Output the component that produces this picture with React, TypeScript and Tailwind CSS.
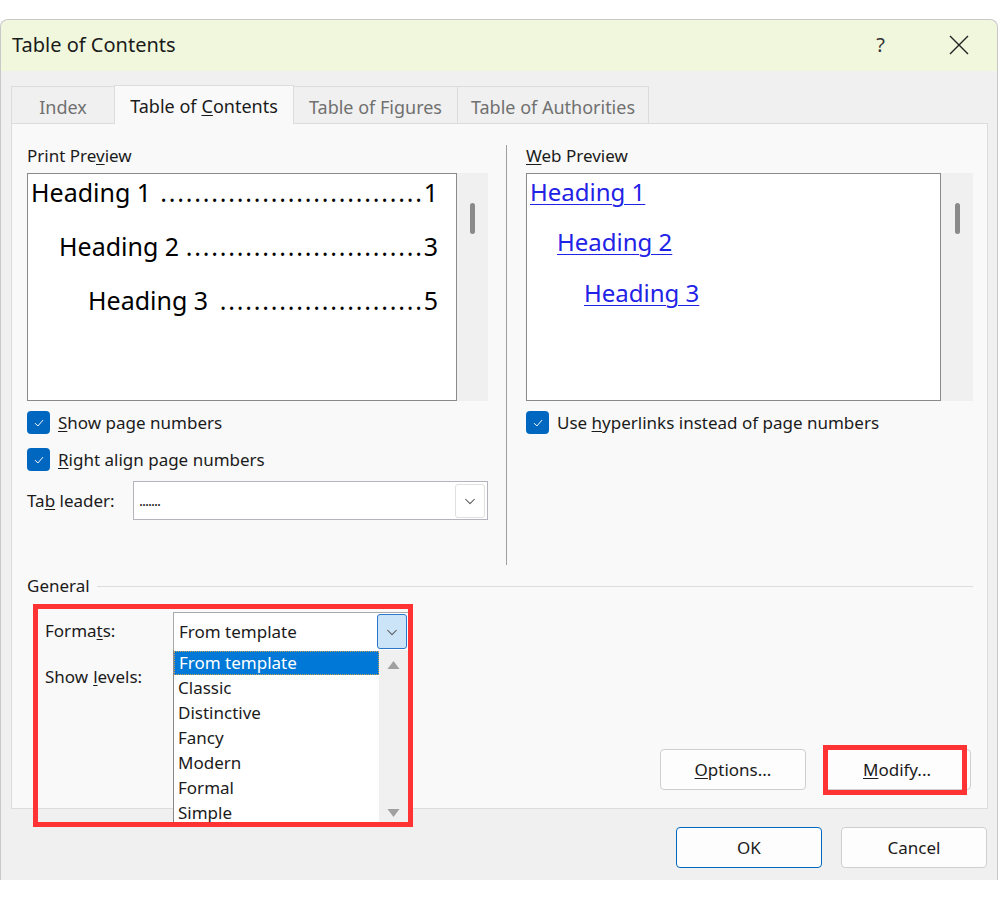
import React from "react";

function Check() {
  return (
    <svg viewBox="0 0 16 16" className="h-[12px] w-[12px]" fill="none" stroke="white" strokeWidth="1.3" strokeLinecap="round" strokeLinejoin="round">
      <path d="M3 8.5 L6.5 12 L13 4.5" />
    </svg>
  );
}

function Chevron() {
  return (
    <svg viewBox="0 0 16 16" className="h-[14px] w-[14px]" fill="none" stroke="#555" strokeWidth="1.2" strokeLinecap="round" strokeLinejoin="round">
      <path d="M3 6 L8 11 L13 6" />
    </svg>
  );
}

function CheckRow({ label, u }: { label: string; u: number }) {
  return (
    <div className="flex h-[23px] items-center gap-[8px]">
      <div className="flex h-[23px] w-[23px] items-center justify-center rounded-[4px] bg-[#0067c0]">
        <Check />
      </div>
      <span className="text-[17px] text-[#1b1b1b]">
        {label.slice(0, u)}
        <span className="underline underline-offset-2">{label[u]}</span>
        {label.slice(u + 1)}
      </span>
    </div>
  );
}

function TocLine({ text, num, dots, indent }: { text: string; num: string; dots: number; indent: string }) {
  return (
    <div className={`mb-[16px] flex h-[38px] items-center pr-[18px] text-[25px] text-black ${indent}`}>
      <span className="whitespace-pre">{text}</span>
      <span className="flex flex-1 justify-end whitespace-nowrap tracking-[1.8px]">{".".repeat(dots)}</span>
      <span>{num}</span>
    </div>
  );
}

export default function App() {
  const formats = ["Classic", "Distinctive", "Fancy", "Modern", "Formal", "Simple"];
  return (
    <div className="h-[900px] w-[1000px] bg-white pt-[19px] font-['Noto_Sans',sans-serif] text-[#1b1b1b]">
      <div className="h-[861px] w-[998px] rounded-t-[8px] border-x border-t border-[#c8c8c8] bg-[#f0f0f0]">
        {/* title bar */}
        <div className="flex h-[51px] items-center rounded-t-[8px] bg-[#f0f7dc] pb-[2px] pl-[11px] pr-[28px]">
          <span className="text-[20px] text-[#1b1b1b]">Table of Contents</span>
          <span className="ml-auto mr-[64px] text-[20px] text-[#333]">?</span>
          <svg viewBox="0 0 20 20" className="h-[20px] w-[20px]" fill="none" stroke="#222" strokeWidth="1.4">
            <path d="M1 1 L19 19 M19 1 L1 19" />
          </svg>
        </div>

        {/* tabs */}
        <div className="flex h-[52px] items-end pl-[10px]">
          <div className="flex h-[37px] w-[103px] items-center justify-center border-l border-t border-[#dcdcdc] pt-[4px] text-[18px] text-[#707070]">Index</div>
          <div className="relative z-10 -mb-px flex h-[39px] w-[180px] items-center justify-center border-x border-t border-[#dcdcdc] bg-[#f9f9f9] pt-[3px] text-[18px] text-[#1b1b1b]">
            Table of <span className="ml-[5px] underline underline-offset-2">C</span>ontents
          </div>
          <div className="flex h-[37px] w-[164px] items-center justify-center border-t border-r border-[#dcdcdc] pt-[4px] text-[18px] text-[#707070]">Table of Figures</div>
          <div className="flex h-[37px] w-[191px] items-center justify-center border-t border-r border-[#dcdcdc] pt-[4px] text-[18px] text-[#707070]">Table of Authorities</div>
        </div>

        {/* panel */}
        <div className="relative ml-[10px] h-[686px] w-[977px] border border-[#dcdcdc] bg-[#f9f9f9] pl-[15px] pr-[14px] pt-[21px]">
          <div className="flex h-[420px]">
            {/* left column */}
            <div className="w-[461px]">
              <div className="h-[22px] text-[17px] leading-[22px]">
                Print Pre<span className="underline underline-offset-2">v</span>iew
              </div>
              <div className="mt-[6px] flex h-[228px]">
                <div className="w-[430px] border border-[#8a8a8a] bg-white pl-[3px]">
                  <TocLine text="Heading 1 " num="1" dots={31} indent="pl-0" />
                  <TocLine text="Heading 2" num="3" dots={28} indent="pl-[28px]" />
                  <TocLine text="Heading 3 " num="5" dots={24} indent="pl-[57px]" />
                </div>
                <div className="flex w-[31px] justify-center bg-[#f0f0f0] pt-[30px]">
                  <div className="h-[31px] w-[5px] rounded-full bg-[#8a8a8a]" />
                </div>
              </div>
              <div className="mt-[10px]">
                <CheckRow label="Show page numbers" u={0} />
              </div>
              <div className="mt-[14px]">
                <CheckRow label="Right align page numbers" u={0} />
              </div>
              <div className="mt-[10px] flex h-[39px] items-center">
                <span className="w-[106px] text-[17px]">
                  Ta<span className="underline underline-offset-2">b</span> leader:
                </span>
                <div className="flex h-[39px] flex-1 items-center border border-[#b4b4bc] bg-white pl-[5px] pr-[2px]">
                  <span className="text-[15px] leading-none tracking-[-1px]">.......</span>
                  <div className="ml-auto flex h-[34px] w-[30px] items-center justify-center rounded-[3px] border border-[#e0e0e0] bg-white">
                    <Chevron />
                  </div>
                </div>
              </div>
            </div>

            {/* divider */}
            <div className="ml-[18px] mr-[19px] w-px bg-[#a0a0a0]" />

            {/* right column */}
            <div className="w-[447px]">
              <div className="h-[22px] text-[17px] leading-[22px]">
                <span className="underline underline-offset-2">W</span>eb Preview
              </div>
              <div className="mt-[6px] flex h-[228px]">
                <div className="w-[415px] border border-[#8a8a8a] bg-white pl-[3px] text-[24px] text-[#2222e6]">
                  <div className="flex h-[36px] items-center">
                    <span className="underline decoration-1 underline-offset-[3px]">Heading 1</span>
                  </div>
                  <div className="mt-[14px] flex h-[36px] items-center pl-[27px]">
                    <span className="underline decoration-1 underline-offset-[3px]">Heading 2</span>
                  </div>
                  <div className="mt-[15px] flex h-[36px] items-center pl-[54px]">
                    <span className="underline decoration-1 underline-offset-[3px]">Heading 3</span>
                  </div>
                </div>
                <div className="flex w-[32px] justify-center bg-[#f0f0f0] pt-[30px]">
                  <div className="h-[31px] w-[5px] rounded-full bg-[#8a8a8a]" />
                </div>
              </div>
              <div className="mt-[10px]">
                <CheckRow label="Use hyperlinks instead of page numbers" u={4} />
              </div>
            </div>
          </div>

          {/* general */}
          <div className="mt-[10px] flex h-[22px] items-center">
            <span className="text-[17px]">General</span>
            <div className="ml-[7px] h-px flex-1 bg-[#dddddd]" />
          </div>
          <div className="mt-[15px] flex h-[38px] items-center pl-[18px]">
            <span className="w-[128px] text-[17px]">
              Forma<span className="underline underline-offset-2">t</span>s:
            </span>
            <div className="flex h-[38px] w-[235px] items-center border-l border-t border-[#a9a9a9] bg-white pl-[5px] pr-px">
              <span className="text-[17px]">From template</span>
              <div className="ml-auto flex h-[35px] w-[30px] items-center justify-center rounded-[3px] border border-[#2a77c9] bg-[#cce4f7]">
                <Chevron />
              </div>
            </div>
          </div>
          <div className="mt-[16px] flex h-[22px] items-center pl-[18px] text-[17px]">
            Show <span className="ml-[5px] underline underline-offset-2">l</span>evels:
          </div>

          <div className="mt-[61px] flex justify-end gap-[17px] pr-[2px]">
            <button className="h-[41px] w-[146px] rounded-[4px] border border-[#cfcfcf] bg-[#fdfdfd] text-[17px] text-[#1b1b1b]">
              <span className="underline underline-offset-2">O</span>ptions...
            </button>
            <button className="h-[41px] w-[148px] rounded-[4px] border border-[#cfcfcf] bg-[#fdfdfd] text-[17px] text-[#1b1b1b]">
              <span className="underline underline-offset-2">M</span>odify...
            </button>
          </div>

          {/* dropdown list popup */}
          <div className="absolute left-[161px] top-[526px] z-20 flex h-[174px] w-[235px] border-l border-[#888] bg-white">
            <div className="flex-1 pt-px">
              <div className="flex h-[24px] items-center border border-dotted border-[#c8a060] bg-[#0078d7] pl-[4px] text-[17px] text-white">
                From template
              </div>
              {formats.map((f) => (
                <div key={f} className="flex h-[25px] items-center pl-[4px] text-[17px] text-[#1b1b1b]">
                  {f}
                </div>
              ))}
            </div>
            <div className="flex w-[29px] flex-col items-center justify-between bg-[#f0f0f0] pb-[7px] pt-[11px]">
              <svg viewBox="0 0 12 8" className="h-[8px] w-[13px]"><path d="M6 0 L12 8 L0 8 Z" fill="#a0a0a0" /></svg>
              <svg viewBox="0 0 12 8" className="h-[8px] w-[13px]"><path d="M0 0 L12 0 L6 8 Z" fill="#a0a0a0" /></svg>
            </div>
          </div>

          {/* red annotation boxes */}
          <div className="pointer-events-none absolute left-[21px] top-[480px] z-30 h-[223px] w-[380px] border-[5px] border-[#ff3333]" />
          <div className="pointer-events-none absolute left-[811px] top-[621px] z-30 h-[50px] w-[144px] border-[5px] border-[#ff3333]" />
        </div>

        {/* bottom buttons */}
        <div className="mt-[18px] flex justify-end gap-[19px] pr-[10px]">
          <button className="h-[41px] w-[146px] rounded-[4px] border border-[#0067c0] bg-[#fdfdfd] text-[17px] text-[#1b1b1b]">OK</button>
          <button className="h-[41px] w-[146px] rounded-[4px] border border-[#cfcfcf] bg-[#fdfdfd] text-[17px] text-[#1b1b1b]">Cancel</button>
        </div>
      </div>
    </div>
  );
}
